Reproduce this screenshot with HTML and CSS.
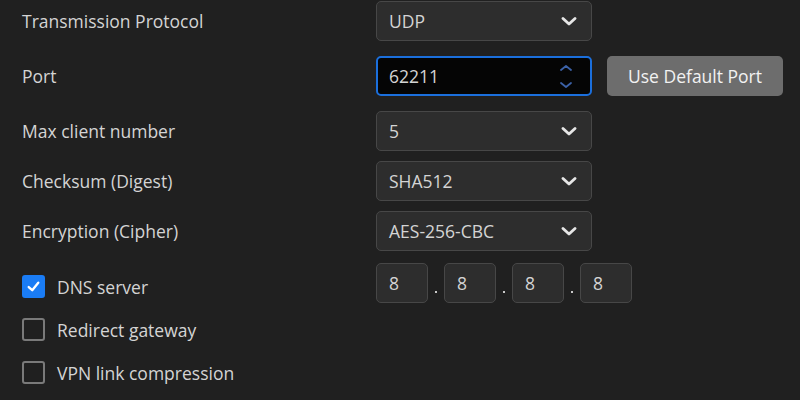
FILE: index.html
```html
<!DOCTYPE html>
<html>
<head>
<meta charset="utf-8">
<link rel="stylesheet" href="styles.css">
</head>
<body>
<div class="form">
  <div class="row r1">
    <div class="label">Transmission Protocol</div>
    <div class="select"><span>UDP</span><svg class="chev" viewBox="0 0 16 9"><path d="M2 1.5 L8 7 L14 1.5"/></svg></div>
  </div>
  <div class="row r2">
    <div class="label">Port</div>
    <div class="input"><span>62211</span>
      <div class="spin">
        <svg viewBox="0 0 12 6"><path d="M1 5 L6 1 L11 5"/></svg>
        <svg viewBox="0 0 12 6"><path d="M1 1 L6 5 L11 1"/></svg>
      </div>
    </div>
    <div class="btn">Use Default Port</div>
  </div>
  <div class="row r3">
    <div class="label">Max client number</div>
    <div class="select"><span>5</span><svg class="chev" viewBox="0 0 16 9"><path d="M2 1.5 L8 7 L14 1.5"/></svg></div>
  </div>
  <div class="row r4">
    <div class="label">Checksum (Digest)</div>
    <div class="select"><span>SHA512</span><svg class="chev" viewBox="0 0 16 9"><path d="M2 1.5 L8 7 L14 1.5"/></svg></div>
  </div>
  <div class="row r5">
    <div class="label">Encryption (Cipher)</div>
    <div class="select"><span>AES-256-CBC</span><svg class="chev" viewBox="0 0 16 9"><path d="M2 1.5 L8 7 L14 1.5"/></svg></div>
  </div>
  <div class="row r6">
    <div class="label check-label"><span class="box checked"><svg viewBox="0 0 16 16"><path d="M3.5 8.5 L6.8 11.5 L12.5 4.5"/></svg></span>DNS server</div>
    <div class="ip">
      <div class="oct">8</div><span class="dot"></span>
      <div class="oct">8</div><span class="dot"></span>
      <div class="oct">8</div><span class="dot"></span>
      <div class="oct">8</div>
    </div>
  </div>
  <div class="crow r7"><span class="box"></span>Redirect gateway</div>
  <div class="crow r8"><span class="box"></span>VPN link compression</div>
</div>
</body>
</html>
```
FILE: styles.css
```css
html, body {
  margin: 0;
  padding: 0;
  background: #202020;
  width: 800px;
  height: 400px;
  overflow: hidden;
}
body {
  font-family: "Open Sans", "Noto Sans", sans-serif;
  font-size: 17.5px;
  color: #d4d4d4;
}
.form {
  padding: 1px 0 0 22px;
  display: flex;
  flex-direction: column;
}
.row {
  display: flex;
  align-items: center;
  height: 40px;
}
.r2, .r3 { margin-top: 15px; }
.r4, .r5 { margin-top: 10px; }
.r6 { margin-top: 12px; align-items: flex-start; }
.label {
  width: 354px;
  flex: none;
}
.select {
  box-sizing: border-box;
  width: 216px;
  height: 40px;
  background: #2d2d2d;
  border: 1px solid #474747;
  border-radius: 5px;
  display: flex;
  align-items: center;
  justify-content: space-between;
  padding: 0 14px 0 12px;
}
.chev {
  width: 16px;
  height: 9px;
  fill: none;
  stroke: #e6e6e6;
  stroke-width: 2.8;
  stroke-linecap: round;
  stroke-linejoin: round;
}
.input {
  box-sizing: border-box;
  width: 216px;
  height: 40px;
  background: #050505;
  border: 2px solid #1b6fdc;
  border-radius: 5px;
  display: flex;
  align-items: center;
  justify-content: space-between;
  padding: 0 18px 0 11px;
}
.spin {
  display: flex;
  flex-direction: column;
  gap: 11px;
}
.spin svg {
  width: 12px;
  height: 6px;
  fill: none;
  stroke: #3c62a8;
  stroke-width: 1.8;
  stroke-linecap: round;
  stroke-linejoin: round;
  display: block;
}
.btn {
  margin-left: 15px;
  width: 176px;
  height: 40px;
  background: #6d6d6d;
  color: #f2f2f2;
  border-radius: 5px;
  display: flex;
  align-items: center;
  justify-content: center;
}
.check-label {
  display: flex;
  align-items: center;
  height: 23px;
  margin-top: 12px;
}
.box {
  box-sizing: border-box;
  width: 23px;
  height: 23px;
  border: 2px solid #7a7a7a;
  border-radius: 3px;
  margin-right: 12px;
  flex: none;
  display: flex;
  align-items: center;
  justify-content: center;
}
.box.checked {
  background: #1a7cf5;
  border-color: #1a7cf5;
}
.box svg {
  width: 17px;
  height: 17px;
  fill: none;
  stroke: #ffffff;
  stroke-width: 2.2;
  stroke-linecap: round;
  stroke-linejoin: round;
}
.ip {
  display: flex;
  align-items: center;
}
.oct {
  box-sizing: border-box;
  width: 52px;
  height: 40px;
  background: #2d2d2d;
  border: 1px solid #474747;
  border-radius: 5px;
  padding-left: 12px;
  display: flex;
  align-items: center;
}
.dot {
  width: 2px;
  height: 2px;
  background: #c8c8c8;
  margin: 18px 7px 0 7px;
}
.crow {
  display: flex;
  align-items: center;
  height: 23px;
}
.r7 { margin-top: 15px; }
.r8 { margin-top: 20px; }
```
